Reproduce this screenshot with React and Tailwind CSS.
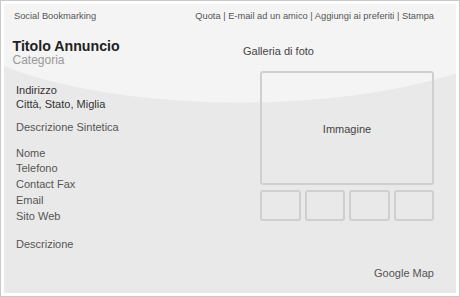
const contactLines = ['Nome', 'Telefono', 'Contact Fax', 'Email', 'Sito Web'];

function Thumb() {
  return <div className="h-[31px] rounded-[3px] border-2 border-[#cfcfcf]" />;
}

export default function App() {
  return (
    <div className="h-[297px] w-[460px] border border-[#c9c9c9] bg-white p-[3px] font-['Liberation_Sans',Arial,sans-serif]">
      <div className="flex h-full flex-col bg-[radial-gradient(ellipse_311px_103px_at_236px_-4px,#f4f4f4_99%,#e9e9e9_100%)]">
        <header className="flex justify-between pt-[6px] pl-[10px] pr-[22px] text-[9.3px] leading-[12px] text-[#555]">
          <span>Social Bookmarking</span>
          <span>Quota | E-mail ad un amico | Aggiungi ai preferiti | Stampa</span>
        </header>

        <div className="flex flex-1 pr-[22px]">
          <section className="w-[239px] pl-[8.5px]">
            <h1 className="mt-[17px] text-[14.2px] font-bold leading-[15px] text-[#222]">
              Titolo Annuncio
            </h1>
            <div className="text-[12px] leading-[12px] text-[#999]">Categoria</div>

            <div className="ml-[3.5px] text-[11px] text-[#555]">
              <div className="mt-[16.5px] leading-[14px] text-[#333]">
                <div>Indirizzo</div>
                <div>Città, Stato, Miglia</div>
              </div>
              <div className="mt-[9.5px] leading-[15.7px]">Descrizione Sintetica</div>
              <div className="mt-[10px] leading-[15.7px]">
                {contactLines.map((line) => (
                  <div key={line}>{line}</div>
                ))}
              </div>
              <div className="mt-[12.5px] leading-[15.7px]">Descrizione</div>
            </div>
          </section>

          <section className="flex-1">
            <div className="mt-[21.5px] text-[11px] leading-[14px] text-[#444]">
              Galleria di foto
            </div>
            <div className="ml-[17px] mt-[13px] w-[174px]">
              <div className="flex h-[114px] items-center justify-center rounded-[3px] border-2 border-[#cfcfcf] pt-[3px] text-[11px] text-[#444]">
                Immagine
              </div>
              <div className="mt-[5px] grid grid-cols-4 gap-[4px]">
                <Thumb />
                <Thumb />
                <Thumb />
                <Thumb />
              </div>
            </div>
            <div className="mt-[45px] text-right text-[11px] leading-[14px] text-[#555]">
              Google Map
            </div>
          </section>
        </div>
      </div>
    </div>
  );
}
